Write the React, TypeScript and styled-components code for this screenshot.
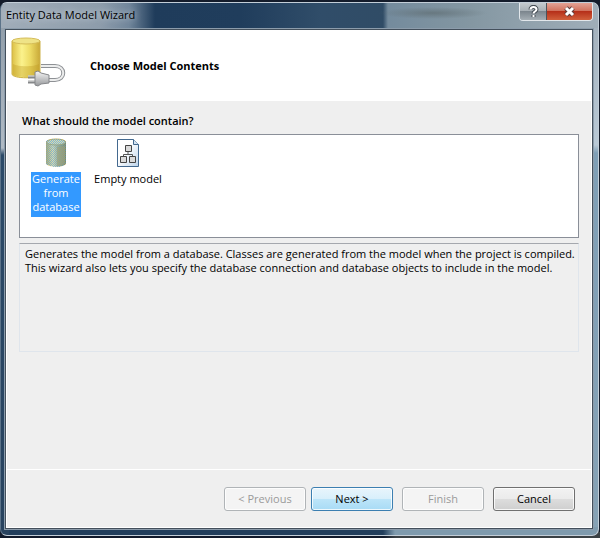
import React from "react";
import styled, { createGlobalStyle, css } from "styled-components";

const Global = createGlobalStyle`
  * { box-sizing: border-box; }
  html, body, #root { height: 100%; margin: 0; }
  body {
    background: #141c2b;
    font: 11px/14px "Open Sans", "Noto Sans", sans-serif;
    color: #000;
  }
  button { font: inherit; }
`;

const Dialog = styled.main`
  height: 100%;
  padding: 2px 1px 2px 0;
  background: linear-gradient(90deg, #10192a 0 64%, #3a4145 66% 100%) bottom / 100% 6px no-repeat, #141c2b;
`;

const Glass = styled.div`
  height: 100%;
  display: flex;
  flex-direction: column;
  padding: 0 5px 0 4px;
  border: 1px solid #c3ced8;
  border-left-color: #5c7389;
  border-radius: 7px;
  background:
    linear-gradient(90deg, transparent 0 64%, #7f9bae 66%) bottom / 100% 8px no-repeat,
    linear-gradient(#8d9aa6, #b0bac4 145px, #2c4a68 152px, #28435f) left / 8px 100% no-repeat,
    linear-gradient(#a0adb8, #b9c9d6 142px, #7f9fb6 150px, #86a2b5) right / 8px 100% no-repeat,
    #213e5c;
`;

const TitleBar = styled.header`
  display: flex;
  align-items: flex-start;
  justify-content: space-between;
  height: 25px;
  margin: 0 -5px 0 -4px;
  padding: 0 5px;
  border-radius: 6px 6px 0 0;
  background:
    radial-gradient(ellipse 54px 6px at 432px 10px, #5d6b70aa, transparent),
    linear-gradient(90deg, #a1adb9 0, #8d9cab 100px, #71869b 128px, #1f3c5b 154px, #203d5c 240px, #304d69 320px, #304c66 382px, #748b9d 387px, #8497a2 470px, #a0aeb9 100%);
`;

const Title = styled.h1`
  margin: 0;
  padding-top: 5px;
  font-size: 11px;
  font-weight: 400;
  line-height: 14px;
  text-shadow: 0 0 6px #dbe3ea;
`;

const Captions = styled.div`
  display: flex;
  height: 18px;
  border: 1px solid #e2e7eb;
  border-top: 0;
  border-radius: 0 0 4px 4px;
  overflow: hidden;
`;

const CaptionButton = styled.button<{ $danger?: boolean }>`
  display: grid;
  place-items: center;
  width: ${(p) => (p.$danger ? 45 : 27)}px;
  padding: 0;
  border: 0;
  border-right: ${(p) => (p.$danger ? 0 : "1px solid #4b545c")};
  background: ${(p) =>
    p.$danger
      ? "linear-gradient(#e3a295, #d1735f 45%, #b6301a 50%, #d1603c)"
      : "linear-gradient(#c4cace, #a8b0b6 45%, #7c868e 50%, #a5aeb4)"};
`;

const Client = styled.section`
  flex: 1;
  display: flex;
  flex-direction: column;
  border: 1px solid #44505c;
  outline: 1px solid #8c9cab;
  background: #fff;
  padding: 0 1px 1px;
  margin: 1px 0 6px;
`;

const Banner = styled.div`
  display: flex;
  align-items: center;
  gap: 21px;
  height: 71px;
  padding-left: 2px;
  svg { margin-bottom: 8px; }
`;

const Heading = styled.h2`
  margin: 0;
  font-size: 11px;
  line-height: 14px;
`;

const Body = styled.div`
  flex: 1;
  padding: 13px 12px 0;
  background: #efefef;
`;

const Question = styled.h3`
  margin: 0 3px 6px;
  font-size: 11px;
  font-weight: 600;
  line-height: 14px;
`;

const Choices = styled.div`
  display: flex;
  align-items: flex-start;
  height: 104px;
  padding: 3px 0;
  border: 1px solid #8a8f98;
  background: #fff;
`;

const Choice = styled.button<{ $selected?: boolean }>`
  display: flex;
  flex-direction: column;
  align-items: center;
  gap: 4px;
  width: 72px;
  padding: 0;
  border: 0;
  background: none;
  color: ${(p) => (p.$selected ? "#fff" : "#000")};
  span {
    padding: 0 1px 3px;
    white-space: nowrap;
    ${(p) => p.$selected && css`width: 50px; white-space: normal; background: #3399ff;`}
  }
`;

const Description = styled.p`
  height: 109px;
  margin: 5px 0 0;
  padding: 3px 0 0 5px;
  border: 1px solid #dfe5ec;
  border-top-color: #a5a8ae;
`;

const Footer = styled.footer`
  display: flex;
  justify-content: flex-end;
  height: 58px;
  padding: 17px 16px 0 0;
  border-top: 1px solid #fff;
  background: #efefef;
`;

const Push = styled.button<{ $primary?: boolean }>`
  width: 82px;
  height: 24px;
  margin-left: 9px;
  padding: 0 0 1px;
  border: 1px solid ${(p) => (p.$primary ? "#3c7fb1" : "#707070")};
  border-radius: 3px;
  box-shadow: inset 0 0 0 1px #ffffffcc;
  background: ${(p) =>
    p.$primary
      ? "linear-gradient(#e8f5fc, #d8effb 49%, #bde5f9 50%, #a8dbf5)"
      : "linear-gradient(#f2f2f2, #ebebeb 49%, #dddddd 50%, #cfcfcf)"};
  color: #000;
  &:disabled { border-color: #b0b4b7; background: #f4f4f4; color: #9a9a9a; }
`;

const Back = styled(Push)`
  margin-right: -4px;
`;

const DatabasePlug = () => (
  <svg width="60" height="50" viewBox="0 0 60 50" aria-hidden="true">
    <defs>
      <linearGradient id="gold"><stop stopColor="#dcc046" /><stop offset=".35" stopColor="#fbf28c" /><stop offset=".65" stopColor="#eddb64" /><stop offset="1" stopColor="#c9a938" /></linearGradient>
      <linearGradient id="steel" x2="0" y2="1"><stop stopColor="#f7f7f7" /><stop offset="1" stopColor="#96989b" /></linearGradient>
    </defs>
    <path d="M3 4v33c0 5 28 5 28 0V4z" fill="url(#gold)" stroke="#cdb148" />
    <path d="M4 27c5 3 21 3 26 0v10c0 4-26 4-26 0z" fill="#bd971f" opacity=".35" />
    <ellipse cx="17" cy="4" rx="14" ry="3" fill="#efe387" stroke="#d5bc58" />
    <path d="M32 29h14c11 0 11 14 0 14h-7" fill="none" stroke="#8e9195" strokeWidth="4" />
    <path d="M32 29h14c11 0 11 14 0 14h-7" fill="none" stroke="#eceded" strokeWidth="2" />
    <path d="M19 40h8M19 45h8" stroke="#858789" strokeWidth="3" />
    <path d="M19 39h8M19 44h8" stroke="#e8e8e8" />
    <path d="M26 35l3-1 3 2 8 2v8l-8 1-3 2-3-1z" fill="url(#steel)" stroke="#85878a" />
  </svg>
);

const DatabaseIcon = () => (
  <svg width="22" height="30" viewBox="0 0 22 30" aria-hidden="true">
    <defs>
      <linearGradient id="drum"><stop stopColor="#b9ad62" /><stop offset=".35" stopColor="#e0dfae" /><stop offset=".65" stopColor="#a9ad7c" /><stop offset="1" stopColor="#8f8c50" /></linearGradient>
      <pattern id="dots" width="2" height="2" patternUnits="userSpaceOnUse"><path d="M0 0h1v1H0zM1 1h1v1H1z" fill="#3f97ec" /></pattern>
    </defs>
    <path d="M1 4v21c0 5 20 5 20 0V4c0-4-20-4-20 0z" fill="url(#drum)" />
    <ellipse cx="11" cy="4" rx="9.5" ry="3" fill="#d8dcb0" stroke="#b8ab62" />
    <path d="M1 4v21c0 5 20 5 20 0V4c0-4-20-4-20 0z" fill="url(#dots)" opacity=".55" shapeRendering="crispEdges" />
    <path d="M12 9l8-1v17c-1 2-5 3-8 3z" fill="#9da27c" opacity=".6" />
  </svg>
);

const ModelIcon = () => (
  <svg width="22" height="30" viewBox="0 0 22 30" aria-hidden="true">
    <defs><linearGradient id="paper" x2="1" y2="1"><stop offset=".4" stopColor="#fff" /><stop offset="1" stopColor="#bcd3ea" /></linearGradient></defs>
    <path d="M.5 1.500h16l5 5v22H.5z" fill="url(#paper)" stroke="#43698f" />
    <path d="M16.500 1.500v5h5" fill="#d5e4f2" stroke="#43698f" />
    <path d="M11 13v4M6.500 19v-2.500h9V19" fill="none" stroke="#555" />
    <path d="M8.500 7.500h6v6h-6zM3.500 18.500h6v6h-6zM12.500 18.500h6v6h-6z" fill="#dadada" stroke="#444" />
  </svg>
);

const HelpGlyph = () => (
  <svg width="11" height="13" viewBox="0 0 11 13" fill="none" aria-hidden="true">
    <path d="M2.500 4.500c0-3.500 6-3.500 6 0 0 2-3 2-3 4M5.500 10v2" stroke="#454d55" strokeWidth="4" />
    <path d="M2.500 4.500c0-3.500 6-3.500 6 0 0 2-3 2-3 4M5.500 10v2" stroke="#fff" strokeWidth="2" />
  </svg>
);

const CloseGlyph = () => (
  <svg width="13" height="11" viewBox="0 0 13 11" aria-hidden="true">
    <path d="M3 2l7 7M10 2l-7 7" stroke="#5d3d3d" strokeWidth="5" />
    <path d="M3 2l7 7M10 2l-7 7" stroke="#fff" strokeWidth="3" />
  </svg>
);

export default function App() {
  return (
    <>
      <Global />
      <Dialog>
        <Glass>
          <TitleBar>
            <Title>Entity Data Model Wizard</Title>
            <Captions>
              <CaptionButton aria-label="Help"><HelpGlyph /></CaptionButton>
              <CaptionButton $danger aria-label="Close"><CloseGlyph /></CaptionButton>
            </Captions>
          </TitleBar>
          <Client>
            <Banner>
              <DatabasePlug />
              <Heading>Choose Model Contents</Heading>
            </Banner>
            <Body>
              <Question id="question">What should the model contain?</Question>
              <Choices role="group" aria-labelledby="question">
                <Choice $selected aria-pressed="true">
                  <DatabaseIcon />
                  <span>Generate from database</span>
                </Choice>
                <Choice aria-pressed="false">
                  <ModelIcon />
                  <span>Empty model</span>
                </Choice>
              </Choices>
              <Description>
                Generates the model from a database. Classes are generated from the model when the project is compiled. This wizard also lets you specify the database connection and database objects to include in the model.
              </Description>
            </Body>
            <Footer>
              <Back disabled>&lt; Previous</Back>
              <Push $primary>Next &gt;</Push>
              <Push disabled>Finish</Push>
              <Push>Cancel</Push>
            </Footer>
          </Client>
        </Glass>
      </Dialog>
    </>
  );
}
